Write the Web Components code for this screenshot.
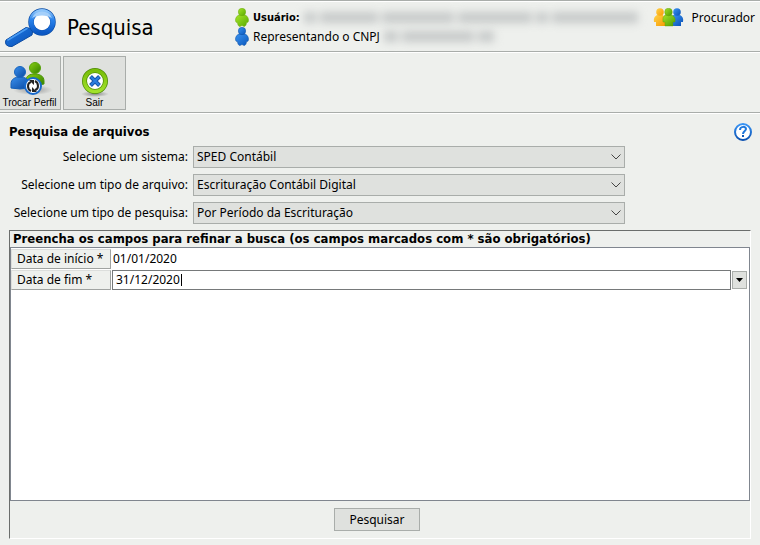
<!DOCTYPE html>
<html lang="pt-BR">
<head>
<meta charset="utf-8">
<title>Pesquisa</title>
<style>
  html { height: 100%; }
  body {
    margin: 0;
    min-height: 100%;
    display: flex;
    flex-direction: column;
    background: #eef0ed;
    color: #000;
    font: 12px/16px "Noto Sans", Tahoma, sans-serif;
    --strong: "DejaVu Sans Condensed", Tahoma, sans-serif;
    --line: #a9adaa;
    --face: #dfe1de;
    --ground: #eef0ed;
  }
  search-page { flex: 1; }
</style>
</head>
<body>
<search-page></search-page>

<script>
const icons = {
  search: `<svg width="52" height="40" viewBox="0 0 52 40">
    <defs>
      <linearGradient id="h" x1="0" y1="0" x2="1" y2="1"><stop offset="0" stop-color="#1f7ae4"/><stop offset="1" stop-color="#0a50b6"/></linearGradient>
      <linearGradient id="r" x1="0" y1="0" x2="0" y2="1"><stop offset="0" stop-color="#8cc4fa"/><stop offset=".4" stop-color="#2a83ec"/><stop offset="1" stop-color="#0b58c4"/></linearGradient>
    </defs>
    <path d="M2 32 22 19.500 29 21 28 27 8 38.500Q4 39 2 36.500 1 34 2 32z" fill="url(#h)" stroke="#0a4aa2"/>
    <path d="M4 32 23 20.500" stroke="#4a9cf2" stroke-width="1.500" stroke-linecap="round"/>
    <circle cx="38" cy="14" r="11" fill="#fff" stroke="#0b4ea8" stroke-width="5.500"/>
    <circle cx="38" cy="14" r="10.800" fill="none" stroke="url(#r)" stroke-width="4.500"/>
    <path d="M28 10a11 11 0 0 1 20 0c-5-3.500-15-3.500-20 0z" fill="#a4cffa"/>
  </svg>`,
  userGreen: person('#a6e62a', '#57aa00', '#6aa80c'),
  userBlue: person('#3a92f0', '#0a58bc', '#0b4fa4'),
  group: `<svg width="31" height="19" viewBox="0 0 31 19">
    <defs>
      <linearGradient id="y" x1="0" y1="0" x2="1" y2="1"><stop offset="0" stop-color="#ffd24a"/><stop offset="1" stop-color="#f79a00"/></linearGradient>
      <linearGradient id="g" x1="0" y1="0" x2="1" y2="1"><stop offset="0" stop-color="#a4e22a"/><stop offset="1" stop-color="#4c9c00"/></linearGradient>
      <linearGradient id="b" x1="0" y1="0" x2="1" y2="1"><stop offset="0" stop-color="#3c96f4"/><stop offset="1" stop-color="#084fb4"/></linearGradient>
    </defs>
    <g fill="url(#y)"><path d="M4 7h6l3 5v6H3v-4H1Q0 9 4 7z"/><circle cx="7" cy="4" r="3.800"/></g>
    <g fill="url(#b)"><path d="M20 7h7q4 2 3 7h-2v4H18z"/><circle cx="24" cy="4" r="3.800"/></g>
    <g fill="url(#g)" stroke="#5a9a08" stroke-width=".4"><path d="M12 7h7q4 2 3 7h-2v4h-8v-4h-2Q9 9 12 7z"/><circle cx="15.500" cy="4" r="3.800"/></g>
  </svg>`,
  swap: `<svg width="46" height="36" viewBox="0 0 46 36">
    <defs>
      <radialGradient id="s"><stop offset="0" stop-color="#999"/><stop offset="1" stop-color="#999" stop-opacity="0"/></radialGradient>
      <linearGradient id="g" x1="0" y1="0" x2="1" y2="1"><stop offset="0" stop-color="#8bd013"/><stop offset="1" stop-color="#338000"/></linearGradient>
      <linearGradient id="b" x1="0" y1="0" x2="1" y2="1"><stop offset="0" stop-color="#3a90ee"/><stop offset="1" stop-color="#0848a0"/></linearGradient>
    </defs>
    <ellipse cx="26" cy="29" rx="20" ry="5" fill="url(#s)"/>
    <path d="M19 23v-4c0-4 4-6 8-6s10 1 10 7v3q-8 3-18 0z" fill="url(#g)" stroke="#4a9407"/>
    <circle cx="28" cy="7" r="5.500" fill="url(#g)" stroke="#58a30a"/>
    <path d="M4 27v-4c0-5 4-7 9-7s9 2 9 7v4q-9 2-18 0z" fill="url(#b)" stroke="#1560b8"/>
    <circle cx="13" cy="11" r="5.500" fill="url(#b)" stroke="#1765c0"/>
    <circle cx="26" cy="25" r="8" fill="#fff" stroke="#1769cc" stroke-width="2"/>
    <path d="M24 30c-4-2-4-8 0-9M28 20c4 2 4 8 0 9" fill="none" stroke="#222" stroke-width="2"/>
    <path d="M22 19h5v5zM30 31h-5v-5z" fill="#222"/>
  </svg>`,
  exit: `<svg width="30" height="30" viewBox="0 0 30 30">
    <defs>
      <radialGradient id="s"><stop offset="0" stop-color="#888"/><stop offset="1" stop-color="#888" stop-opacity="0"/></radialGradient>
      <linearGradient id="g" x1="0" y1="0" x2="0" y2="1"><stop offset="0" stop-color="#78bd08"/><stop offset="1" stop-color="#a2e22c"/></linearGradient>
    </defs>
    <ellipse cx="15" cy="27" rx="14" ry="3" fill="url(#s)"/>
    <circle cx="15" cy="14" r="10.500" fill="#fff" stroke="#4e8c06" stroke-width="5"/>
    <circle cx="15" cy="14" r="10.500" fill="none" stroke="url(#g)" stroke-width="3.500"/>
    <path d="m10.500 9.500 9 9m0-9-9 9" stroke="#1555aa" stroke-width="4"/>
    <path d="m11 10 8 8m0-8-8 8" stroke="#2a7fe0" stroke-width="2"/>
  </svg>`,
  help: `<svg width="18" height="18" viewBox="0 0 18 18">
    <defs><linearGradient id="q" x1="0" y1="0" x2="0" y2="1"><stop offset="0" stop-color="#3a95f5"/><stop offset="1" stop-color="#0a50b0"/></linearGradient></defs>
    <circle cx="9" cy="9" r="8" fill="#fff" stroke="url(#q)" stroke-width="2"/>
    <path d="M6 7c0-4 6-4 6-1 0 2-3 2-3 5" fill="none" stroke="#1f78dc" stroke-width="2"/>
    <path d="M8 12h2v2H8z" fill="#0f58b8"/>
  </svg>`,
  chevron: `<svg width="10" height="6" viewBox="0 0 10 6"><path d="m.5.5 4.500 4.500L9.500.5" fill="none" stroke="#444"/></svg>`,
  drop: `<svg width="7" height="4" viewBox="0 0 7 4"><path d="M0 0h7L3.500 4z"/></svg>`
};

function person(light, dark, edge) {
  return `<svg width="14" height="19" viewBox="0 0 14 19">
    <defs><linearGradient id="p" x1="0" y1="0" x2="1" y2="1"><stop offset="0" stop-color="${light}"/><stop offset="1" stop-color="${dark}"/></linearGradient></defs>
    <path d="M4.500 7h5c2 0 4 2.500 4 5s-1 2.500-2 2.500c0 2-1 4-2.500 4L7 17.500l-2 1c-1.500 0-2.500-2-2.500-4-1 0-2 0-2-2.500s2-5 4-5z" fill="url(#p)" stroke="${edge}" stroke-width=".5"/>
    <circle cx="7" cy="4" r="3.700" fill="url(#p)" stroke="${edge}" stroke-width=".5"/>
  </svg>`;
}

class UiIcon extends HTMLElement {
  connectedCallback() {
    this.attachShadow({ mode: 'open' }).innerHTML = `
      <style>
        :host { display: inline-flex; flex: none; }
        svg { display: block; }
      </style>
      ${icons[this.getAttribute('name')]}`;
  }
}

// Text that is hidden behind a smear, used for personal data
class RedactedText extends HTMLElement {
  connectedCallback() {
    const words = this.getAttribute('words').split(' ');
    this.attachShadow({ mode: 'open' }).innerHTML = `
      <style>
        :host { display: inline-flex; gap: 4px; filter: blur(4px); }
        i { height: 11px; background: #c6c9c9; }
      </style>
      ${words.map(w => `<i style="width:${w}px"></i>`).join('')}`;
  }
}

class PageHeader extends HTMLElement {
  constructor() {
    super();
    this.attachShadow({ mode: 'open' }).innerHTML = `
      <style>
        :host {
          display: flex;
          align-items: flex-start;
          height: 50px;
          border-top: 1px solid var(--line);
          border-bottom: 1px solid var(--line);
          box-shadow: inset 0 1px #fff, 0 1px #fff;
          padding: 0 5px 0 4px;
        }
        .title { display: flex; align-items: center; gap: 11px; flex: 0 0 231px; padding-top: 7px; }
        h1 { margin: 0; font: 22px/28px var(--strong); }
        b { font: bold 11px/16px var(--strong); }
        .who { flex: 1; padding-top: 7px; }
        .who div { display: flex; align-items: center; gap: 4px; height: 19px; }
        .role { display: flex; align-items: center; gap: 8px; padding-top: 7px; }
      </style>
      <div class="title"><ui-icon name="search"></ui-icon><h1>Pesquisa</h1></div>
      <div class="who">
        <div><ui-icon name="userGreen"></ui-icon><b>Usuário:</b><redacted-text words="12 58 72 74 12 86"></redacted-text></div>
        <div><ui-icon name="userBlue"></ui-icon><span>Representando o CNPJ</span><redacted-text words="14 72 16"></redacted-text></div>
      </div>
      <div class="role"><ui-icon name="group"></ui-icon><span>Procurador</span></div>`;
  }
}

class ToolButton extends HTMLElement {
  constructor() {
    super();
    this.attachShadow({ mode: 'open' }).innerHTML = `
      <style>
        :host { display: block; }
        button {
          display: flex;
          flex-direction: column;
          align-items: center;
          justify-content: flex-end;
          width: 63px;
          height: 54px;
          padding: 0;
          border: 1px solid var(--line);
          background: var(--face);
          color: #000;
          font: 10px/12px "Liberation Sans", Arial, sans-serif;
          white-space: nowrap;
        }
      </style>
      <button type="button"><slot name="icon"></slot><span><slot></slot></span></button>`;
  }
}

class SelectField extends HTMLElement {
  connectedCallback() {
    this.attachShadow({ mode: 'open' }).innerHTML = `
      <style>
        :host { display: grid; grid-template-columns: 179px minmax(0, 432px); gap: 5px; align-items: center; }
        label { text-align: right; white-space: nowrap; }
        .box { display: grid; align-items: center; }
        .box > * { grid-area: 1 / 1; }
        select {
          appearance: none;
          height: 22px;
          margin: 0;
          padding: 0 20px 0 3px;
          border: 1px solid var(--line);
          border-radius: 0;
          background: var(--face);
          color: #000;
          font: inherit;
        }
        ui-icon { justify-self: end; margin-right: 4px; pointer-events: none; }
      </style>
      <label for="list">${this.getAttribute('label')}</label>
      <div class="box">
        <select id="list"><option>${this.getAttribute('value')}</option></select>
        <ui-icon name="chevron"></ui-icon>
      </div>`;
  }
}

class FilterPanel extends HTMLElement {
  constructor() {
    super();
    this.attachShadow({ mode: 'open' }).innerHTML = `
      <style>
        :host {
          display: flex;
          flex-direction: column;
          border: 1px solid #6b6e6c;
          border-right-color: #fff;
          border-bottom-color: #fff;
        }
        h3 { margin: 0; padding: 0 3px; font: bold 13px/16px var(--strong); }
        .fields { flex: 1; background: #fff; border: 1px solid #80868f; }
        table { width: 100%; border-collapse: collapse; }
        th, td { padding: 0; height: 21px; }
        th { width: 101px; text-align: left; font-weight: normal; }
        label {
          display: block;
          box-sizing: border-box;
          width: 100px;
          height: 20px;
          padding: 1px 5px;
          line-height: 16px;
          background: var(--ground);
          border: 1px solid #a0a3a1;
          border-left-color: #dcdedc;
          border-top-color: #dcdedc;
          white-space: nowrap;
        }
        input {
          display: block;
          box-sizing: border-box;
          width: 100%;
          height: 20px;
          margin: 0;
          padding: 0 1px;
          border: 0;
          outline: 0;
          background: #fff;
          color: #000;
          font: inherit;
        }
        .combo { display: flex; gap: 1px; align-items: center; padding-right: 2px; }
        .edit { flex: 1; display: grid; align-items: center; }
        .edit > * { grid-area: 1 / 1; }
        .edit input { border: 1px solid #76797a; padding: 0 3px; }
        .caret { width: 1px; height: 12px; margin-left: 69px; background: #000; }
        .combo button {
          display: flex;
          align-items: center;
          justify-content: center;
          width: 15px;
          height: 18px;
          padding: 0;
          border: 1px solid var(--line);
          background: var(--face);
        }
        .actions { display: flex; justify-content: center; padding: 7px 0; }
        .actions button {
          height: 23px;
          padding: 0 14px;
          margin-right: 6px;
          border: 1px solid var(--line);
          background: var(--face);
          color: #000;
          font: inherit;
        }
      </style>
      <h3>Preencha os campos para refinar a busca (os campos marcados com * são obrigatórios)</h3>
      <div class="fields">
        <table>
          <tr>
            <th><label for="start">Data de início *</label></th>
            <td><input id="start" value="01/01/2020"></td>
          </tr>
          <tr>
            <th><label for="end">Data de fim *</label></th>
            <td>
              <div class="combo">
                <div class="edit"><input id="end" value="31/12/2020"><span class="caret"></span></div>
                <button type="button" aria-label="Abrir calendário"><ui-icon name="drop"></ui-icon></button>
              </div>
            </td>
          </tr>
        </table>
      </div>
      <div class="actions"><button type="button">Pesquisar</button></div>`;
  }
}

class SearchPage extends HTMLElement {
  constructor() {
    super();
    this.attachShadow({ mode: 'open' }).innerHTML = `
      <style>
        :host { display: flex; flex-direction: column; }
        nav {
          display: flex;
          gap: 2px;
          padding: 4px 0 2px;
          border-bottom: 1px solid var(--line);
          box-shadow: 0 1px #fff;
        }
        /* the bar starts flush, its first button runs under the window edge */
        tool-button:first-child { margin-left: -2px; }
        main { flex: 1; display: flex; flex-direction: column; padding: 9px 8px 6px 9px; }
        .heading { display: flex; justify-content: space-between; align-items: center; height: 20px; }
        h2 { margin: 0; font: bold 13px/16px var(--strong); }
        .help { display: flex; padding: 0; border: 0; background: none; }
        .lists { display: flex; flex-direction: column; gap: 6px; padding: 4px 0 6px; }
        filter-panel { flex: 1; margin-right: 1px; }
      </style>
      <page-header></page-header>
      <nav>
        <tool-button><ui-icon slot="icon" name="swap"></ui-icon>Trocar Perfil</tool-button>
        <tool-button><ui-icon slot="icon" name="exit"></ui-icon>Sair</tool-button>
      </nav>
      <main>
        <div class="heading">
          <h2>Pesquisa de arquivos</h2>
          <button class="help" type="button" aria-label="Ajuda"><ui-icon name="help"></ui-icon></button>
        </div>
        <div class="lists">
          <select-field label="Selecione um sistema:" value="SPED Contábil"></select-field>
          <select-field label="Selecione um tipo de arquivo:" value="Escrituração Contábil Digital"></select-field>
          <select-field label="Selecione um tipo de pesquisa:" value="Por Período da Escrituração"></select-field>
        </div>
        <filter-panel></filter-panel>
      </main>`;
  }
}

customElements.define('ui-icon', UiIcon);
customElements.define('redacted-text', RedactedText);
customElements.define('page-header', PageHeader);
customElements.define('tool-button', ToolButton);
customElements.define('select-field', SelectField);
customElements.define('filter-panel', FilterPanel);
customElements.define('search-page', SearchPage);
</script>
</body>
</html>
